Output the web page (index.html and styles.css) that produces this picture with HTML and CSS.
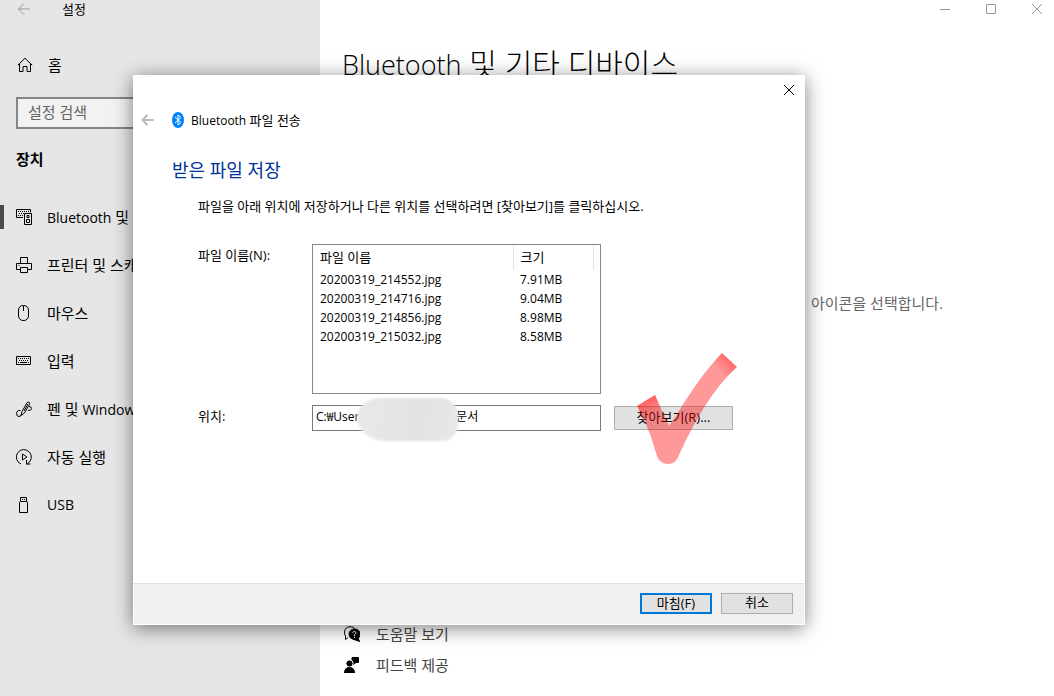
FILE: index.html
```
<!DOCTYPE html>
<html lang="ko">
<head>
  <meta charset="UTF-8">
  <meta name="viewport" content="width=device-width, initial-scale=1.0">
  <title>설정</title>
  <link rel="stylesheet" href="styles.css">
</head>
<body>

  <div class="settings">
    <!-- Sidebar -->
    <aside class="sidebar">
      <div class="title-bar">
        <button class="icon-btn" type="button" aria-label="뒤로">
          <svg class="icon muted" viewBox="0 0 16 16"><path d="M14 8H2.5M8 2.5L2.5 8L8 13.5"/></svg>
        </button>
        <span class="app-title">설정</span>
      </div>

      <a class="home" href="#">
        <svg class="icon" viewBox="0 0 16 16"><path d="M.8 8.2L8 1.2L15.2 8.2M2.5 7V14.5H6V9.5H10V14.5H13.5V7"/></svg>
        <span>홈</span>
      </a>

      <input class="search" type="text" placeholder="설정 검색" aria-label="설정 검색">

      <h2 class="section-title">장치</h2>

      <nav class="nav">
        <a class="nav-item active" href="#">
          <svg class="icon" viewBox="0 0 16 16"><path d="M7 8.5H.5V.5H14.5V3.5"/><path d="M2 2.5H13M3 4.5H8M2 6.5H7" stroke-dasharray="1 1"/><path d="M8.5 4.5H15.5V15.5H8.5ZM11 6.5H13V8.5H11ZM10.5 10.5H13.5V13.5H10.5Z"/></svg>
          <span><span class="latin">Bluetooth</span> 및</span>
        </a>
        <a class="nav-item" href="#">
          <svg class="icon" viewBox="0 0 16 16"><path d="M4.5 6V.5H11.5V6M4 12.5H.5V6.5H15.5V12.5H12M4.5 10.5H11.5V15.5H4.5ZM2.5 8.5H3.5"/></svg>
          <span>프린터 및 스캐너</span>
        </a>
        <a class="nav-item" href="#">
          <svg class="icon" viewBox="0 0 16 16"><path d="M7.5 .5H8A4.5 4.5 0 0 1 12.5 5V11A4.5 4.5 0 0 1 8 15.5H7A4.5 4.5 0 0 1 2.5 11V5A4.5 4.5 0 0 1 7.5 .5ZM7.5 1V6"/></svg>
          <span>마우스</span>
        </a>
        <a class="nav-item" href="#">
          <svg class="icon" viewBox="0 0 16 16"><path d="M.5 3.5H14.5V11.5H.5Z"/><path d="M2 5.5H13M3 7.5H13" stroke-dasharray="1 1"/><path d="M2 9.5H3M4 9.5H11M12 9.5H13"/></svg>
          <span>입력</span>
        </a>
        <a class="nav-item" href="#">
          <svg class="icon" viewBox="0 0 16 16"><path d="M5 14.5L6 10.5L11 1.8Q12.5 .3 13.5 1.5Q14 2.3 13.3 3.5L8.5 12ZM8 10L12 3M4.5 9.5H2.5Q.5 10 .5 12.5Q.5 15.5 3 15.5Q4.8 15.5 5.2 14M13 5.5Q15.5 5.5 15.5 7.5Q15.5 9.5 12 9.5"/></svg>
          <span>펜 및 <span class="latin">Windows</span></span>
        </a>
        <a class="nav-item" href="#">
          <svg class="icon" viewBox="0 0 16 16"><path d="M5 15A7.5 7.5 0 1 1 11.5 14.6M6.5 5V11L11 8ZM10.5 11V15.5M10.5 15H14.5"/></svg>
          <span>자동 실행</span>
        </a>
        <a class="nav-item" href="#">
          <svg class="icon" viewBox="0 0 16 16"><path d="M4.5 4.5V.5H10.5V4.5M4.5 4.5H10.5Q11.5 4.5 11.5 5.5V15.5H3.5V5.5Q3.5 4.5 4.5 4.5ZM6 2.5H7M8 2.5H9"/></svg>
          <span class="latin">USB</span>
        </a>
      </nav>
    </aside>

    <!-- Main page -->
    <main class="page">
      <div class="window-controls">
        <button class="icon-btn" type="button" aria-label="최소화"><svg class="icon-small muted" viewBox="0 0 10 10"><path d="M0 5.5H10"/></svg></button>
        <button class="icon-btn" type="button" aria-label="최대화"><svg class="icon-small muted" viewBox="0 0 10 10"><path d="M.5 .5H9.5V9.5H.5Z"/></svg></button>
        <button class="icon-btn" type="button" aria-label="닫기"><svg class="icon-small muted" viewBox="0 0 10 10"><path d="M0 0L10 10M10 0L0 10"/></svg></button>
      </div>
      <h1 class="page-title"><span class="latin">Bluetooth</span> 및 기타 디바이스</h1>
      <p class="page-text">아이콘을 선택합니다.</p>
      <div class="links">
        <a class="help-link" href="#">
          <svg class="icon" viewBox="0 0 16 16"><path d="M4 11.5L1.5 13.5V10Q.5 8.5 .5 6Q1 1 6 .7Q9.5 .6 11 3"/><path d="M10.2 3A5.3 5.3 0 1 1 8.5 13Q5 12 5 8.3A5.3 5.3 0 0 1 10.2 3ZM13.5 11L15.7 15.5L10 13.5Z" class="solid"/><path d="M8.8 6.8Q9 5.4 10.4 5.4Q12 5.5 12 6.8Q12 7.8 10.5 8.6V9.8M10.5 10.8V12" stroke="#fff"/></svg>
          <span>도움말 보기</span>
        </a>
        <a class="help-link" href="#">
          <svg class="icon" viewBox="0 0 16 16"><path class="solid" d="M8 .5H14.5V5.5H12L9.5 7.5V5.5H8Z"/><circle class="solid" cx="5.5" cy="6.5" r="3.6" stroke="#fff"/><path class="solid" d="M.5 16Q.5 10.5 5.5 10.5Q10.5 10.5 10.5 16Z"/></svg>
          <span>피드백 제공</span>
        </a>
      </div>
    </main>
  </div>

  <!-- Bluetooth file transfer window -->
  <div class="dialog" role="dialog" aria-labelledby="dialog-title">
    <div class="dialog-top">
      <button class="icon-btn" type="button" aria-label="닫기"><svg class="icon-small" viewBox="0 0 10 10"><path d="M0 0L10 10M10 0L0 10"/></svg></button>
    </div>
    <div class="dialog-header">
      <button class="icon-btn" type="button" aria-label="뒤로">
        <svg class="back-arrow" viewBox="0 0 14 12"><path d="M13 6H2M6.5 1L1.5 6L6.5 11"/></svg>
      </button>
      <svg class="bt-logo" viewBox="0 0 12 16"><ellipse cx="6" cy="8" rx="6" ry="8" fill="#0082fc"/><path d="M3 5L9 10.5L6 13V3L9 5.5L3 11" fill="none" stroke="#fff"/></svg>
      <span id="dialog-title"><span class="latin">Bluetooth</span> 파일 전송</span>
    </div>

    <div class="dialog-body">
      <h2 class="dialog-heading">받은 파일 저장</h2>
      <p class="dialog-text">파일을 아래 위치에 저장하거나 다른 위치를 선택하려면 [찾아보기]를 클릭하십시오.</p>

      <div class="form">
        <span class="label" id="files-label">파일 이름(N):</span>
        <div class="file-list">
          <table aria-labelledby="files-label">
            <thead>
              <tr><th class="name">파일 이름</th><th class="size">크기</th></tr>
            </thead>
            <tbody>
              <tr><td>20200319_214552.jpg</td><td>7.91MB</td></tr>
              <tr><td>20200319_214716.jpg</td><td>9.04MB</td></tr>
              <tr><td>20200319_214856.jpg</td><td>8.98MB</td></tr>
              <tr><td>20200319_215032.jpg</td><td>8.58MB</td></tr>
            </tbody>
          </table>
        </div>

        <label class="label" for="location">위치:</label>
        <div class="location">
          <input type="text" id="location" value="C:₩User                               문서">
          <span class="smudge"></span>
        </div>
        <div class="browse">
          <button class="btn" type="button">찾아보기(R)...</button>
          <svg class="check" viewBox="0 0 102 114">
            <defs>
              <linearGradient id="tick" gradientUnits="userSpaceOnUse" x1="0" y1="100" x2="100" y2="0">
                <stop offset=".82" stop-color="#f00" stop-opacity=".4"/>
                <stop offset=".95" stop-color="#f00" stop-opacity=".62"/>
              </linearGradient>
              <linearGradient id="tick-left" gradientUnits="userSpaceOnUse" x1="9" y1="48" x2="16" y2="64">
                <stop offset="0" stop-color="#f00" stop-opacity=".38"/>
                <stop offset="1" stop-color="#f00" stop-opacity="0"/>
              </linearGradient>
            </defs>
            <path fill="url(#tick)" d="M1 54L19 43L33 74C46 56 60 28 86 1L101 15C77 37 60 66 43 103Q40 112 32 112Q24 112 21 104C15 84 10 70 1 54Z"/>
            <path fill="url(#tick-left)" d="M1 54L19 43L28 63L7 66Z"/>
          </svg>
        </div>
      </div>
    </div>

    <div class="dialog-footer">
      <button class="btn primary" type="button">마침(F)</button>
      <button class="btn" type="button">취소</button>
    </div>
  </div>

</body>
</html>
```
FILE: styles.css
```
* {
  margin: 0;
  padding: 0;
  box-sizing: border-box;
}

body {
  font-family: 'Open Sans', 'Noto Sans CJK KR', sans-serif;
  font-size: 13px;
  line-height: 20px;
  color: #000;
  background-color: #fff;
  position: relative;
  overflow: hidden;
}

a {
  color: inherit;
  text-decoration: none;
}

button,
input {
  font-family: inherit;
  font-size: inherit;
  color: inherit;
}

svg {
  display: block;
  flex: none;
}

.icon,
.icon-small,
.back-arrow {
  fill: none;
  stroke: #000;
}

.icon {
  width: 16px;
  height: 16px;
}

.icon-small {
  width: 10px;
  height: 10px;
}

.icon .solid {
  fill: #000;
}

.muted {
  stroke: #999;
}

.icon-btn {
  background: none;
  border: none;
}

/* Settings window */
.settings {
  display: grid;
  grid-template-columns: 320px 1fr;
  min-height: 100vh;
}

.sidebar {
  background: #e6e6e6;
  font-size: 15px;
}

.title-bar {
  display: flex;
  align-items: center;
  gap: 30px;
  height: 18px;
  padding-left: 16px;
}

.app-title {
  font-size: 13px;
}

.home {
  display: flex;
  align-items: center;
  gap: 15px;
  height: 48px;
  margin-top: 23px;
  padding-left: 17px;
}

.search {
  display: block;
  width: 288px;
  height: 32px;
  margin: 8px 16px 7px;
  padding: 0 10px 2px;
  border: 2px solid #858585;
  background: #f2f2f2;
}

.search::placeholder {
  color: #666;
}

.section-title {
  margin-top: 20px;
  padding-left: 16px;
  font-size: 15px;
  font-weight: 600;
}

.nav {
  margin-top: 24px;
}

.nav-item {
  display: flex;
  align-items: center;
  gap: 15px;
  height: 48px;
  padding-left: 16px;
  white-space: nowrap;
}

.nav-item .latin {
  font-size: 14px;
}

.nav-item.active {
  background: linear-gradient(#4c4a48, #4c4a48) left center / 4px 24px no-repeat;
}

.page {
  display: flex;
  flex-direction: column;
  padding-left: 22px;
  font-size: 15px;
}

.window-controls {
  display: flex;
  justify-content: flex-end;
  align-items: center;
  gap: 36px;
  height: 18px;
  padding-right: 12px;
}

.page-title {
  margin-top: 26px;
  font-size: 30px;
  font-weight: 300;
  line-height: 40px;
}

.page-title .latin {
  font-size: 27px;
}

.page-text {
  margin-top: 208px;
  padding-left: 469px;
  color: #666;
  white-space: nowrap;
}

.links {
  margin-top: 305px;
  color: #444;
}

.help-link {
  display: flex;
  align-items: center;
  gap: 16px;
  height: 31px;
  padding-left: 2px;
}

/* Dialog */
.dialog {
  position: absolute;
  top: 75px;
  left: 133px;
  width: calc(100% - 133px);
  max-width: 672px;
  background: #fff;
  box-shadow: 0 3px 18px rgba(0, 0, 0, 0.5);
}

.dialog-top {
  display: flex;
  justify-content: flex-end;
  align-items: center;
  height: 30px;
  padding-right: 11px;
}

.dialog-header {
  display: flex;
  align-items: center;
  height: 30px;
  padding-left: 8px;
}

.dialog-header .latin {
  font-size: 12px;
}

.back-arrow {
  width: 14px;
  height: 12px;
  stroke: #bbb;
  stroke-width: 2;
}

.bt-logo {
  width: 12px;
  height: 16px;
  margin: 0 7px 0 17px;
}

.dialog-body {
  padding: 22px 72px 152px 39px;
}

.dialog-heading {
  font-size: 18px;
  font-weight: 400;
  line-height: 26px;
  color: #003399;
}

.dialog-text {
  margin: 13px 0 28px 26px;
  white-space: nowrap;
}

.form {
  display: grid;
  grid-template-columns: 114px 289px 132px;
  row-gap: 11px;
  margin-left: 26px;
}

.label {
  grid-column: 1;
  padding-top: 1px;
}

.file-list {
  height: 150px;
  border: 1px solid #828790;
}

table {
  width: 281px;
  border-collapse: collapse;
  table-layout: fixed;
  font-size: 12px;
}

th {
  height: 25px;
  padding: 0 0 2px 7px;
  border-right: 1px solid #e5e5e5;
  font-size: 13px;
  font-weight: 400;
  text-align: left;
}

th.name {
  width: 200px;
}

td {
  height: 19px;
  padding-left: 7px;
  line-height: 19px;
}

.location {
  position: relative;
}

.location input {
  display: block;
  width: 100%;
  height: 26px;
  padding: 0 3px 4px;
  border: 1px solid #7a7a7a;
  background: #fff;
  font-size: 12px;
}

/* covers the user name in the path */
.smudge {
  position: absolute;
  top: -7px;
  left: 45px;
  width: 101px;
  height: 43px;
  border-radius: 24px 18px 16px 30px / 20px 18px 18px 24px;
  background: linear-gradient(100deg, #e9e9e9, #e3e3e3 60%, #e8e8e8);
  filter: blur(1px);
}

.browse {
  position: relative;
  padding-left: 13px;
}

.btn {
  padding-bottom: 3px;
  background: #e1e1e1;
  border: 1px solid #adadad;
  line-height: 16px;
}

.browse .btn {
  width: 119px;
  height: 24px;
  margin-top: 1px;
}

.check {
  position: absolute;
  left: 35px;
  top: -53px;
  width: 102px;
  height: 114px;
}

.dialog-footer {
  display: flex;
  justify-content: flex-end;
  gap: 9px;
  padding: 9px 11px 10px;
  border: 1px solid #fff;
  border-top-color: #dfdfdf;
  background: #f0f0f0;
}

.dialog-footer .btn {
  width: 72px;
  height: 21px;
}

.dialog-footer .primary {
  border: 2px solid #0078d7;
}
```
